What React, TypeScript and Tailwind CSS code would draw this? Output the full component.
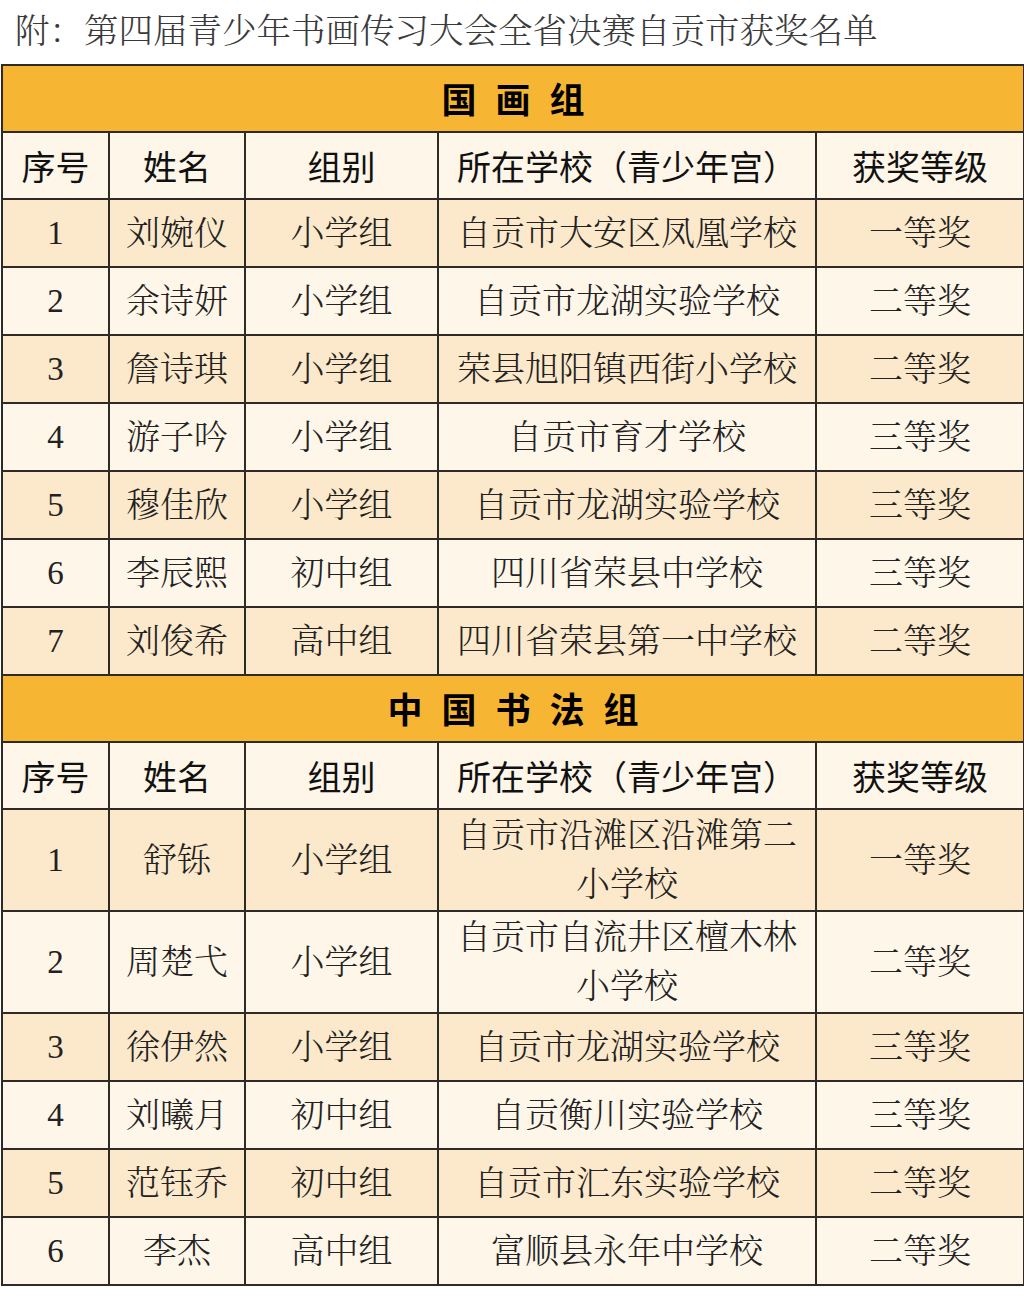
import React from "react";

type Row = [string, string, string, string, string];

const painting: Row[] = [
  ["1", "刘婉仪", "小学组", "自贡市大安区凤凰学校", "一等奖"],
  ["2", "余诗妍", "小学组", "自贡市龙湖实验学校", "二等奖"],
  ["3", "詹诗琪", "小学组", "荣县旭阳镇西街小学校", "二等奖"],
  ["4", "游子吟", "小学组", "自贡市育才学校", "三等奖"],
  ["5", "穆佳欣", "小学组", "自贡市龙湖实验学校", "三等奖"],
  ["6", "李辰熙", "初中组", "四川省荣县中学校", "三等奖"],
  ["7", "刘俊希", "高中组", "四川省荣县第一中学校", "二等奖"],
];

const calligraphy: Row[] = [
  ["1", "舒铄", "小学组", "自贡市沿滩区沿滩第二小学校", "一等奖"],
  ["2", "周楚弋", "小学组", "自贡市自流井区檀木林小学校", "二等奖"],
  ["3", "徐伊然", "小学组", "自贡市龙湖实验学校", "三等奖"],
  ["4", "刘曦月", "初中组", "自贡衡川实验学校", "三等奖"],
  ["5", "范钰乔", "初中组", "自贡市汇东实验学校", "二等奖"],
  ["6", "李杰", "高中组", "富顺县永年中学校", "二等奖"],
];

const serif = { fontFamily: '"Liberation Serif", "Noto Serif CJK SC", "Noto Sans CJK SC", serif' };
const digits = { fontFamily: '"Liberation Serif", "Times New Roman", serif' };
const sans = { fontFamily: '"Noto Sans CJK SC", "Noto Sans", sans-serif' };

const cell = "border-2 border-[#2e2a25] text-center align-middle";

function Section({ title, rows, tall }: { title: string; rows: Row[]; tall?: number[] }) {
  return (
    <>
      <tr className="h-[67px] bg-[#f6b634]">
        <td colSpan={5} className={cell}>
          <span className="text-[35px] font-bold text-black tracking-[19px] pl-[19px]" style={sans}>
            {title}
          </span>
        </td>
      </tr>
      <tr className="h-[67px] bg-[#fef6e9]">
        {["序号", "姓名", "组别", "所在学校（青少年宫）", "获奖等级"].map((h, i) => (
          <td key={i} className={`${cell} text-[34px] font-normal text-[#111] whitespace-nowrap`} style={sans}>
            {h}
          </td>
        ))}
      </tr>
      {rows.map((r, idx) => {
        const isTall = tall?.includes(idx);
        return (
          <tr
            key={idx}
            className={`${isTall ? "h-[102px]" : "h-[68px]"} ${idx % 2 === 0 ? "bg-[#fce9cb]" : "bg-[#fef6e9]"}`}
          >
            {r.map((c, i) => (
              <td
                key={i}
                className={`${cell} leading-[49px] text-[#222] ${i === 0 ? "text-[33px] font-normal" : "text-[34px] font-light"} ${i === 3 ? "px-3" : "px-1"}`}
                style={i === 0 ? digits : serif}
              >
                {c}
              </td>
            ))}
          </tr>
        );
      })}
    </>
  );
}

export default function App() {
  return (
    <div className="w-[1024px] bg-white pb-[12px]">
      <div
        className="h-[64px] pl-[15px] flex items-center text-[34.5px] text-[#3a3a3a] font-light whitespace-nowrap"
        style={serif}
      >
        附：第四届青少年书画传习大会全省决赛自贡市获奖名单
      </div>
      <table className="ml-px w-[1022px] border-collapse table-fixed">
        <colgroup>
          <col className="w-[107px]" />
          <col className="w-[136px]" />
          <col className="w-[193px]" />
          <col className="w-[378px]" />
          <col className="w-[208px]" />
        </colgroup>
        <tbody>
          <Section title="国画组" rows={painting} />
          <Section title="中国书法组" rows={calligraphy} tall={[0, 1]} />
        </tbody>
      </table>
    </div>
  );
}
